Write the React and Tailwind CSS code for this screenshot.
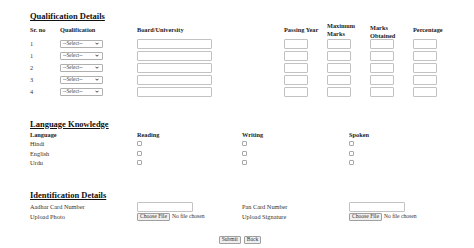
import React from "react";

const qualRows = ["1", "1", "2", "3", "4"];
const languages = ["Hindi", "English", "Urdu"];

const TextBox = ({ className = "" }) => (
  <input
    type="text"
    className={`h-[10px] border border-[#c2c2c2] rounded-[1px] bg-white outline-none ${className}`}
  />
);

const SelectBox = () => (
  <div className="w-[43px] h-[8px] border border-[#b0b0b0] rounded-[1px] bg-white flex items-center justify-between pl-[2px] pr-[3px]">
    <span className="text-[5.2px] leading-none text-[#444]">--Select--</span>
    <svg width="4" height="3" viewBox="0 0 10 8">
      <path d="M1 2 L5 6 L9 2" fill="none" stroke="#333" strokeWidth="2.5" />
    </svg>
  </div>
);

const Check = () => (
  <span className="block w-[5px] h-[5px] border border-[#a8a8a8] rounded-[1px] bg-white" />
);

const FileBox = () => (
  <div className="flex items-center gap-[2px]">
    <span className="h-[8px] px-[2px] flex items-center border border-[#a0a0a0] rounded-[1px] bg-[#efefef] text-[5.6px] leading-none text-[#333]">
      Choose File
    </span>
    <span className="text-[5.6px] leading-none text-[#333]">No file chosen</span>
  </div>
);

const Heading = ({ children }) => (
  <h2 className="text-[8.5px] leading-none font-bold underline text-[#111]">
    {children}
  </h2>
);

export default function App() {
  return (
    <div
      className="w-[474px] h-[248px] bg-white text-[#333] px-[30px] pt-[12px]"
      style={{ fontFamily: '"Liberation Serif", "Times New Roman", serif' }}
    >
      <Heading>Qualification Details</Heading>

      <div className="grid grid-cols-[30px_77px_147px_43px_43px_43px_43px] mt-[2px] text-[6.3px]">
        <div className="h-[15px] flex items-center font-bold text-[#222]">Sr. no</div>
        <div className="h-[15px] flex items-center font-bold text-[#222]">Qualification</div>
        <div className="h-[15px] flex items-center font-bold text-[#222]">Board/University</div>
        <div className="h-[15px] flex items-center font-bold text-[#222]">Passing Year</div>
        <div className="h-[15px] flex items-center font-bold leading-[8px] text-[#222]">
          Maximum
          <br />
          Marks
        </div>
        <div className="h-[15px] flex items-center font-bold leading-[8px] pt-[3px] text-[#222]">
          Marks
          <br />
          Obtained
        </div>
        <div className="h-[15px] flex items-center font-bold text-[#222]">Percentage</div>

        {qualRows.map((sr, i) => (
          <React.Fragment key={i}>
            <div className="h-[12px] flex items-center">{sr}</div>
            <div className="h-[12px] flex items-center">
              <SelectBox />
            </div>
            <div className="h-[12px] flex items-center">
              <TextBox className="w-[75px]" />
            </div>
            <div className="h-[12px] flex items-center">
              <TextBox className="w-[24px]" />
            </div>
            <div className="h-[12px] flex items-center">
              <TextBox className="w-[24px]" />
            </div>
            <div className="h-[12px] flex items-center">
              <TextBox className="w-[24px]" />
            </div>
            <div className="h-[12px] flex items-center">
              <TextBox className="w-[24px]" />
            </div>
          </React.Fragment>
        ))}
      </div>

      <div className="mt-[22px]">
        <Heading>Language Knowledge</Heading>
      </div>
      <div className="grid grid-cols-[107px_105px_107px_1fr] text-[6.3px] mt-[2px]">
        <div className="h-[9px] flex items-end font-bold text-[#222]">Language</div>
        <div className="h-[9px] flex items-end font-bold text-[#222]">Reading</div>
        <div className="h-[9px] flex items-end font-bold text-[#222]">Writing</div>
        <div className="h-[9px] flex items-end font-bold text-[#222]">Spoken</div>
        {languages.map((lang) => (
          <React.Fragment key={lang}>
            <div className="h-[9.5px] flex items-center">{lang}</div>
            <div className="h-[9.5px] flex items-center">
              <Check />
            </div>
            <div className="h-[9.5px] flex items-center">
              <Check />
            </div>
            <div className="h-[9.5px] flex items-center">
              <Check />
            </div>
          </React.Fragment>
        ))}
      </div>

      <div className="mt-[23px]">
        <Heading>Identification Details</Heading>
      </div>
      <div className="grid grid-cols-[107px_105px_107px_1fr] text-[6.3px] mt-[2px]">
        <div className="h-[11px] flex items-center">Aadhar Card Number</div>
        <div className="h-[11px] flex items-center">
          <TextBox className="w-[56px]" />
        </div>
        <div className="h-[11px] flex items-center">Pan Card Number</div>
        <div className="h-[11px] flex items-center">
          <TextBox className="w-[56px]" />
        </div>
        <div className="h-[10px] flex items-center">Upload Photo</div>
        <div className="h-[10px] flex items-center">
          <FileBox />
        </div>
        <div className="h-[10px] flex items-center">Upload Signature</div>
        <div className="h-[10px] flex items-center">
          <FileBox />
        </div>
      </div>

      <div className="flex justify-center gap-[3px] mt-[14px] pl-[6px]">
        <button className="h-[8px] px-[2px] flex items-center border border-[#a0a0a0] rounded-[1px] bg-[#efefef] text-[5.6px] leading-none text-[#333]">
          Submit
        </button>
        <button className="h-[8px] px-[2px] flex items-center border border-[#a0a0a0] rounded-[1px] bg-[#efefef] text-[5.6px] leading-none text-[#333]">
          Back
        </button>
      </div>
    </div>
  );
}
